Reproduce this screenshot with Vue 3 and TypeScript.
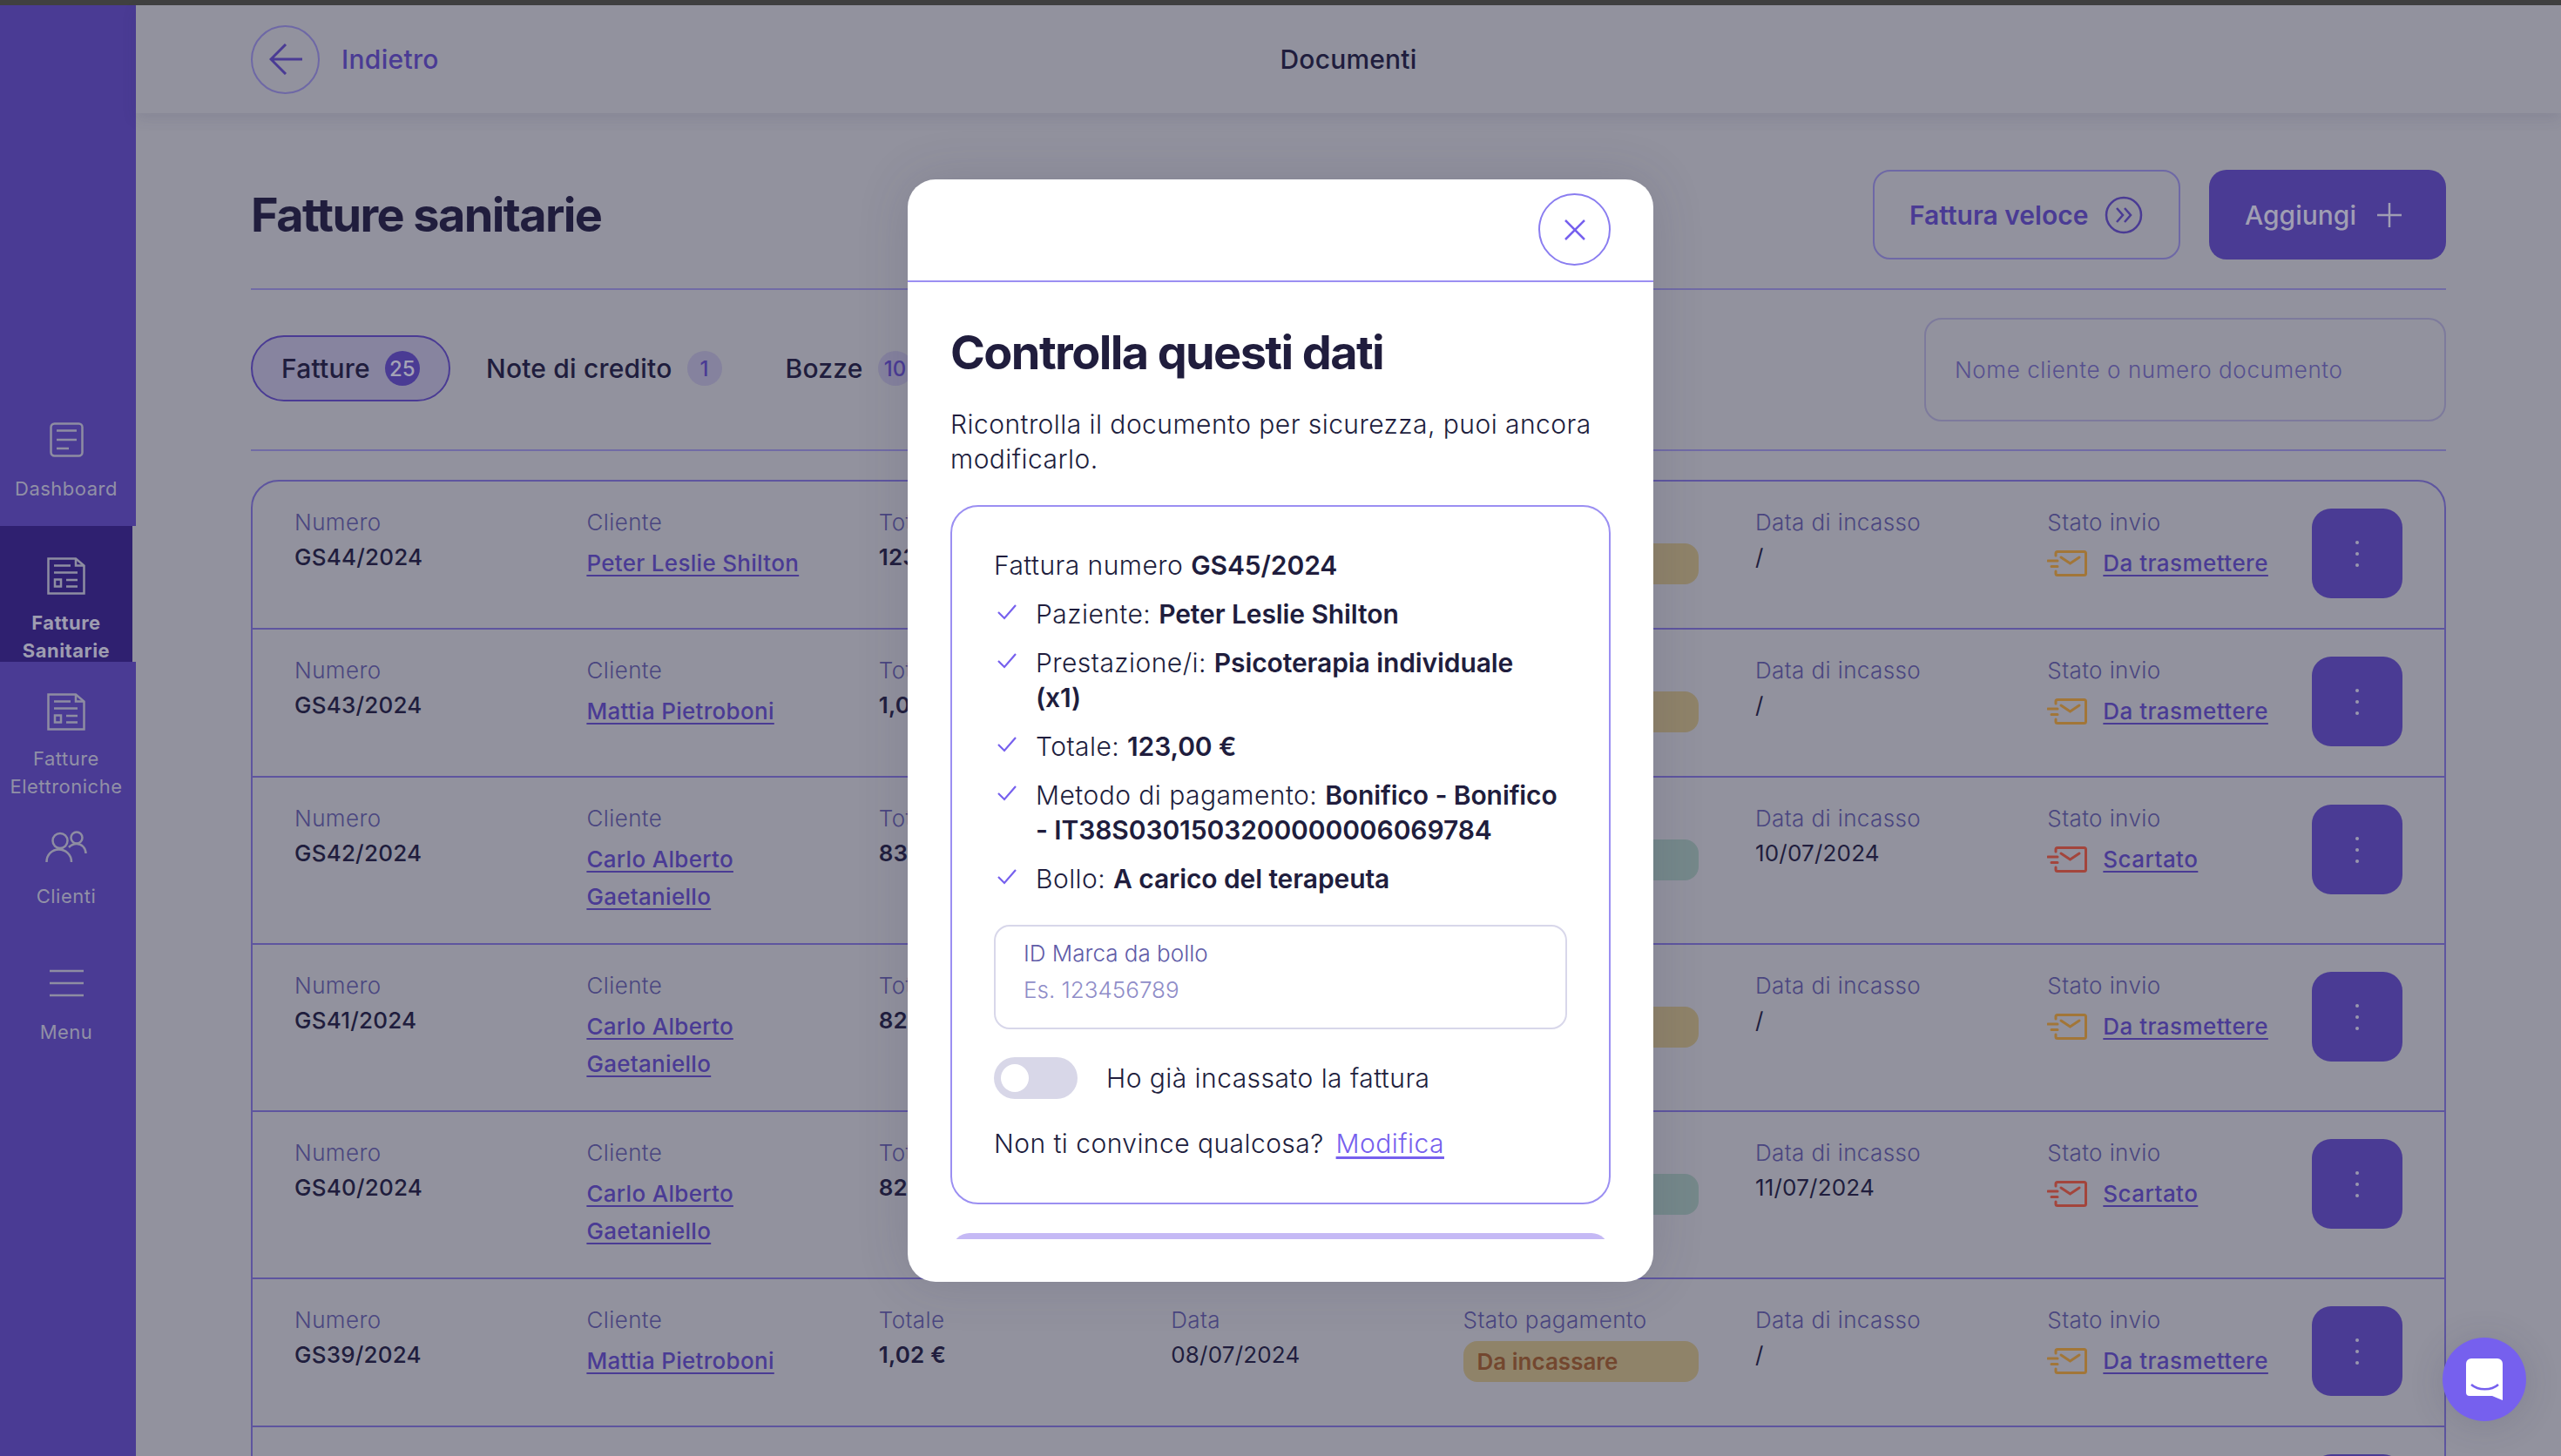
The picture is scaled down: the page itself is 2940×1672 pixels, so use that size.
<template>
  <div class="screen">
    <div class="topbar"></div>
    <div class="stage">
      <aside class="sidebar">
        <div
          v-for="item in navItems"
          :key="item.id"
          class="nav-item"
          :class="[item.icon, { active: item.active }]"
        >
          <div class="nav-icon">
            <svg v-if="item.icon === 'dash'" width="39" height="40" viewBox="0 0 39 40" fill="none">
              <rect x="1.5" y="1.5" width="36" height="37" rx="4" />
              <path d="M8 9.5H31M8 20H31M8 30H22" />
            </svg>
            <svg v-else-if="item.icon === 'doc'" width="44" height="43" viewBox="0 0 44 43" fill="none">
              <path d="M1.5 1.5H33L42.5 9.5V41.5H1.5Z" />
              <path d="M33 1.5V9.5H42.5M8 9.5H27M8 17.5H35M22 26H35M22 33.5H35" />
              <rect x="9" y="25.5" width="7" height="8" />
            </svg>
            <svg v-else-if="item.icon === 'people'" width="48" height="38" viewBox="0 0 48 38" fill="none">
              <circle cx="17" cy="11.5" r="8.5" />
              <path d="M1.5 36C1.5 27 8 21.5 15.5 21.5C23 21.5 30 27 30 36" />
              <circle cx="36" cy="8" r="6.5" />
              <path d="M27 19C30 16 33 15 36 15C42 15 46.5 20 46.5 26" />
            </svg>
            <svg v-else width="39" height="32" viewBox="0 0 39 32" fill="none">
              <path d="M0 2H39M0 16H39M0 30H39" />
            </svg>
          </div>
          <span class="nav-label">{{ item.label }}</span>
        </div>
      </aside>

      <main class="main">
        <header class="page-head">
          <div class="back">
            <span class="back-circle">
              <svg width="38" height="36" viewBox="0 0 38 36" fill="none">
                <path d="M38 18H2M19 1L2 18L19 35" />
              </svg>
            </span>
            <span class="back-text">Indietro</span>
          </div>
          <div class="page-name">Documenti</div>
          <div></div>
        </header>

        <section class="content">
          <div class="title-row">
            <h1>Fatture sanitarie</h1>
            <div class="actions">
              <button type="button" class="btn-outline">
                Fattura veloce
                <svg width="44" height="44" viewBox="0 0 44 44" fill="none">
                  <circle cx="22" cy="22" r="20" />
                  <path d="M14 14L21 22L14 30M23 14L30 22L23 30" />
                </svg>
              </button>
              <button type="button" class="btn-solid">
                Aggiungi
                <svg width="28" height="28" viewBox="0 0 28 28" fill="none">
                  <path d="M14 0V28M0 14H28" />
                </svg>
              </button>
            </div>
          </div>

          <div class="tabs-row">
            <div class="tabs">
              <div class="tab selected">Fatture <span class="count">25</span></div>
              <div class="tab">Note di credito <span class="count">1</span></div>
              <div class="tab">Bozze <span class="count">10</span></div>
            </div>
            <div class="search">Nome cliente o numero documento</div>
          </div>

          <div class="table">
            <div v-for="row in rows" :key="row.num" class="row">
              <div class="cell">
                <span class="label">Numero</span>
                <span class="value strong">{{ row.num }}</span>
              </div>
              <div class="cell">
                <span class="label">Cliente</span>
                <a class="link client">{{ row.client }}</a>
              </div>
              <div class="cell">
                <span class="label">Totale</span>
                <span class="value bold">{{ row.total }}</span>
              </div>
              <div class="cell">
                <span class="label">Data</span>
                <span class="value">{{ row.date }}</span>
              </div>
              <div class="cell">
                <span class="label">Stato pagamento</span>
                <span class="pill" :class="row.paid ? 'paid' : 'due'">
                  {{ row.paid ? 'Incassata' : 'Da incassare' }}
                </span>
              </div>
              <div class="cell">
                <span class="label">Data di incasso</span>
                <span class="value">{{ row.paidOn }}</span>
              </div>
              <div class="cell">
                <span class="label">Stato invio</span>
                <span class="send">
                  <svg
                    width="46"
                    height="30"
                    viewBox="0 0 46 30"
                    fill="none"
                    :class="row.rejected ? 'rejected' : 'waiting'"
                  >
                    <path d="M10 6V3.5Q10 1.5 12 1.5H42.5Q44.5 1.5 44.5 3.5V26.5Q44.5 28.5 42.5 28.5H12Q10 28.5 10 26.5V24" />
                    <path d="M1 12H12M5 18.500H12M16 8L26.500 15L37 8" />
                  </svg>
                  <a class="link">{{ row.rejected ? 'Scartato' : 'Da trasmettere' }}</a>
                </span>
              </div>
              <button type="button" class="row-menu" aria-label="Azioni">
                <svg width="6" height="32" viewBox="0 0 6 32">
                  <circle cx="3" cy="3" r="2" />
                  <circle cx="3" cy="16" r="2" />
                  <circle cx="3" cy="29" r="2" />
                </svg>
              </button>
            </div>
          </div>
        </section>
      </main>

      <div class="modal-layer">
        <div class="modal">
          <div class="modal-head">
            <button type="button" class="close" aria-label="Chiudi">
              <svg width="24" height="24" viewBox="0 0 24 24" fill="none">
                <path d="M1 1L23 23M23 1L1 23" />
              </svg>
            </button>
          </div>
          <div class="modal-body">
            <h2>Controlla questi dati</h2>
            <p class="intro">Ricontrolla il documento per sicurezza, puoi ancora modificarlo.</p>
            <div class="summary">
              <div class="summary-title">Fattura numero <b>GS45/2024</b></div>
              <ul class="checks">
                <li v-for="check in checks" :key="check.name">
                  <svg width="22" height="18" viewBox="0 0 22 18" fill="none">
                    <path d="M1 9L8 16L21 1" />
                  </svg>
                  <span>{{ check.name }}: <b>{{ check.value }}</b></span>
                </li>
              </ul>
              <div class="field">
                <span class="field-label">ID Marca da bollo</span>
                <span class="field-hint">Es. 123456789</span>
              </div>
              <div class="switch-row">
                <span class="switch"><span class="knob"></span></span>
                Ho già incassato la fattura
              </div>
              <div class="edit-row">Non ti convince qualcosa? <a>Modifica</a></div>
            </div>
            <div class="confirm"></div>
          </div>
        </div>
      </div>

      <button type="button" class="chat" aria-label="Chat">
        <svg width="42" height="48" viewBox="0 0 42 48">
          <path d="M6 0H36a6 6 0 0 1 6 6V48L30 43H4a4 4 0 0 1-4-4V6a6 6 0 0 1 6-6Z" fill="#fff" />
          <path d="M6 30C14 37 29 37 37 30" fill="none" stroke="#7660ee" stroke-width="2.500" />
        </svg>
      </button>
    </div>
  </div>
</template>

<script setup lang="ts">
interface NavItem {
  id: string
  label: string
  icon: string
  active?: boolean
}

interface InvoiceRow {
  num: string
  client: string
  total: string
  date: string
  paid: boolean
  paidOn: string
  rejected: boolean
}

const navItems: NavItem[] = [
  { id: 'dash', label: 'Dashboard', icon: 'dash' },
  { id: 'san', label: 'Fatture Sanitarie', icon: 'doc', active: true },
  { id: 'ele', label: 'Fatture Elettroniche', icon: 'doc' },
  { id: 'cli', label: 'Clienti', icon: 'people' },
  { id: 'menu', label: 'Menu', icon: 'menu' },
]

const rows: InvoiceRow[] = [
  { num: 'GS44/2024', client: 'Peter Leslie Shilton', total: '123,00 €', date: '10/07/2024', paid: false, paidOn: '/', rejected: false },
  { num: 'GS43/2024', client: 'Mattia Pietroboni', total: '1,02 €', date: '10/07/2024', paid: false, paidOn: '/', rejected: false },
  { num: 'GS42/2024', client: 'Carlo Alberto Gaetaniello', total: '83,00 €', date: '10/07/2024', paid: true, paidOn: '10/07/2024', rejected: true },
  { num: 'GS41/2024', client: 'Carlo Alberto Gaetaniello', total: '82,00 €', date: '09/07/2024', paid: false, paidOn: '/', rejected: false },
  { num: 'GS40/2024', client: 'Carlo Alberto Gaetaniello', total: '82,00 €', date: '09/07/2024', paid: true, paidOn: '11/07/2024', rejected: true },
  { num: 'GS39/2024', client: 'Mattia Pietroboni', total: '1,02 €', date: '08/07/2024', paid: false, paidOn: '/', rejected: false },
  { num: 'GS38/2024', client: 'Mattia Pietroboni', total: '1,02 €', date: '08/07/2024', paid: false, paidOn: '/', rejected: false },
]

const checks = [
  { name: 'Paziente', value: 'Peter Leslie Shilton' },
  { name: 'Prestazione/i', value: 'Psicoterapia individuale (x1)' },
  { name: 'Totale', value: '123,00 €' },
  { name: 'Metodo di pagamento', value: 'Bonifico - Bonifico - IT38S0301503200000006069784' },
  { name: 'Bollo', value: 'A carico del terapeuta' },
]
</script>

<style>
html,
body {
  margin: 0;
  background: #92929e;
}
</style>

<style scoped>
.screen {
  width: 2940px;
  height: 1672px;
  display: flex;
  flex-direction: column;
  overflow: hidden;
  font-family: Inter, "Liberation Sans", sans-serif;
  color: #201d3d;
  background: #92929e;
}
.topbar {
  height: 6px;
  flex: none;
  background: #404040;
}
.stage {
  flex: 1;
  min-height: 0;
  display: flex;
  position: relative;
}

/* sidebar */
.sidebar {
  width: 156px;
  flex: none;
  box-sizing: border-box;
  padding-top: 442px;
  background: #4a3b94;
}
.nav-item {
  height: 156px;
  box-sizing: border-box;
  padding: 32px 4px 0 0;
  display: flex;
  flex-direction: column;
  align-items: center;
  gap: 16px;
  text-align: center;
  color: #9190a6;
  font-size: 22px;
  line-height: 32px;
  letter-spacing: 0.5px;
}
.nav-item.doc {
  padding-top: 36px;
}
.nav-item.active {
  background: #2f2070;
  border-right: 4px solid #92929e;
  padding-right: 0;
  font-weight: 700;
  color: #9e9db0;
}
.nav-icon {
  height: 49px;
  display: flex;
  align-items: center;
  justify-content: center;
}
.nav-icon svg,
.nav-icon svg * {
  stroke: #8e8da2;
  stroke-width: 2.5;
}

/* page header */
.main {
  flex: 1;
  min-width: 0;
}
.page-head {
  height: 124px;
  box-sizing: border-box;
  padding: 0 132px;
  display: grid;
  grid-template-columns: 1fr auto 1fr;
  align-items: center;
  box-shadow: 0 6px 16px rgba(50, 50, 90, 0.12);
}
.back {
  display: flex;
  align-items: center;
  gap: 25px;
}
.back-circle {
  width: 79px;
  height: 79px;
  box-sizing: border-box;
  border: 2px solid #6e68a6;
  border-radius: 50%;
  display: flex;
  align-items: center;
  justify-content: center;
}
.back-circle svg {
  stroke: #4a3b94;
  stroke-width: 3;
}
.back-text {
  color: #4a3b94;
  font-size: 30px;
  font-weight: 500;
  letter-spacing: 0.3px;
}
.page-name {
  font-size: 30px;
  font-weight: 500;
  letter-spacing: 0.2px;
}

.content {
  padding: 66px 132px 0;
}
.title-row {
  height: 137px;
  box-sizing: border-box;
  padding-bottom: 34px;
  border-bottom: 2px solid #716ba6;
  display: flex;
  justify-content: space-between;
  align-items: center;
}
h1 {
  margin: 0;
  font-size: 54px;
  line-height: 64px;
  font-weight: 700;
  letter-spacing: -1.600px;
}
.actions {
  display: flex;
  gap: 33px;
}
.btn-outline,
.btn-solid {
  height: 103px;
  box-sizing: border-box;
  border-radius: 20px;
  display: flex;
  align-items: center;
  font-family: inherit;
  font-size: 30px;
  font-weight: 600;
}
.btn-outline {
  width: 353px;
  padding: 0 0 0 40px;
  gap: 19px;
  background: transparent;
  border: 2px solid #6e68a6;
  color: #4a3b94;
}
.btn-outline svg {
  stroke: #4a3b94;
  stroke-width: 2.5;
}
.btn-solid {
  width: 272px;
  padding: 0 0 0 41px;
  gap: 24px;
  background: #4a3b94;
  border: 0;
  font-weight: 500;
  color: #a09eb3;
}
.btn-solid svg {
  stroke: #a09eb3;
  stroke-width: 2.5;
}

.tabs-row {
  height: 185px;
  box-sizing: border-box;
  border-bottom: 2px solid #716ba6;
  display: flex;
  justify-content: space-between;
  align-items: center;
}
.tabs {
  display: flex;
  align-items: center;
  gap: 73px;
  margin-top: -3px;
}
.tab {
  display: flex;
  align-items: center;
  gap: 17px;
  font-size: 30px;
  font-weight: 500;
  letter-spacing: 0.2px;
}
.tab.selected {
  width: 229px;
  height: 76px;
  box-sizing: border-box;
  padding-left: 33px;
  border: 2px solid #4a3b94;
  border-radius: 38px;
  background: #87849f;
  margin-right: -32px;
}
.count {
  width: 40px;
  height: 40px;
  border-radius: 50%;
  display: flex;
  align-items: center;
  justify-content: center;
  background: #85829e;
  color: #4a3b94;
  font-size: 24px;
  font-weight: 500;
  letter-spacing: 0;
}
.selected .count {
  background: #4a3b94;
  color: #a4a3b6;
}
.search {
  width: 599px;
  height: 119px;
  box-sizing: border-box;
  padding: 0 33px;
  border: 2px solid #7d7a9c;
  border-radius: 20px;
  display: flex;
  align-items: center;
  color: #56508f;
  font-size: 26px;
  font-weight: 300;
  letter-spacing: 0.6px;
}

/* table */
.table {
  margin-top: 33px;
  border: 2px solid #5e559f;
  border-radius: 32px 32px 0 0;
}
.row {
  display: grid;
  grid-template-columns: repeat(6, 335.4px) 1fr 104px;
  padding: 0 48px;
  border-bottom: 2px solid #5e559f;
}
.cell {
  padding: 31px 0 32px;
  display: flex;
  flex-direction: column;
  align-items: flex-start;
}
.label {
  font-size: 26px;
  line-height: 32px;
  font-weight: 300;
  letter-spacing: 0.4px;
  color: #4a4680;
}
.value {
  margin-top: 4px;
  font-size: 26px;
  line-height: 40px;
  font-weight: 400;
  letter-spacing: 0.2px;
}
.value.strong {
  font-weight: 500;
}
.value.bold {
  font-weight: 600;
}
.link {
  color: #4a3b94;
  font-size: 26px;
  line-height: 43px;
  font-weight: 500;
  letter-spacing: 0.3px;
  text-decoration: underline;
  text-underline-offset: 4px;
}
.client {
  margin-top: 9px;
  max-width: 290px;
}
.pill {
  margin-top: 8px;
  width: 270px;
  height: 47px;
  box-sizing: border-box;
  padding-left: 16px;
  border-radius: 16px;
  display: flex;
  align-items: center;
  font-size: 26px;
  font-weight: 600;
}
.pill.due {
  background: #8f8369;
  color: #73472f;
}
.pill.paid {
  background: #75888a;
  color: #2f6a62;
}
.send {
  margin-top: 9px;
  height: 43px;
  display: flex;
  align-items: center;
  gap: 18px;
}
.send .link {
  letter-spacing: 0.45px;
}
.send svg {
  stroke-width: 3;
  stroke-linecap: round;
}
.send svg.waiting {
  stroke: #a27638;
}
.send svg.rejected {
  stroke: #a3453c;
}
.row-menu {
  width: 104px;
  height: 103px;
  margin: 31px 0 34px;
  padding: 0;
  border: 0;
  border-radius: 22px;
  background: #4a3b94;
  display: flex;
  align-items: center;
  justify-content: center;
}
.row-menu svg {
  fill: #9a98ae;
}

/* modal */
.modal-layer {
  position: absolute;
  inset: 0;
  display: flex;
  align-items: center;
  justify-content: center;
}
.modal {
  width: 856px;
  height: 1266px;
  box-sizing: border-box;
  padding-bottom: 49px;
  border-radius: 32px;
  background: #fff;
  box-shadow: 0 0 60px rgba(50, 50, 90, 0.16);
  display: flex;
  flex-direction: column;
  font-size: 30px;
  line-height: 40px;
  letter-spacing: 0.45px;
}
.modal-head {
  height: 118px;
  flex: none;
  box-sizing: border-box;
  padding: 16px 49px 0 0;
  border-bottom: 2px solid #9b8ff2;
  display: flex;
  justify-content: flex-end;
  align-items: flex-start;
}
.close {
  width: 83px;
  height: 83px;
  padding: 0;
  background: #fff;
  border: 2px solid #8a7df0;
  border-radius: 50%;
  display: flex;
  align-items: center;
  justify-content: center;
}
.close svg {
  stroke: #7660ee;
  stroke-width: 2.5;
}
.modal-body {
  flex: 1;
  min-height: 0;
  overflow: hidden;
  padding: 49px 49px 0;
}
h2 {
  margin: 0 0 30px;
  font-size: 54px;
  line-height: 64px;
  font-weight: 700;
  letter-spacing: -1.600px;
}
.intro {
  margin: 0 0 33px;
  font-weight: 300;
}
.summary {
  padding: 47px 48px 48px;
  border: 2px solid #9b8ff2;
  border-radius: 32px;
  font-weight: 300;
}
b {
  font-weight: 600;
  letter-spacing: -0.1px;
}
.checks {
  list-style: none;
  margin: 16px 0 33px;
  padding: 0;
  display: flex;
  flex-direction: column;
  gap: 16px;
}
.checks li {
  display: flex;
  gap: 22px;
  padding-right: 8px;
}
.checks svg {
  flex: none;
  margin: 9px 0 0 4px;
  stroke: #7660ee;
  stroke-width: 2.2;
}
.field {
  height: 120px;
  box-sizing: border-box;
  padding: 10px 32px 0;
  border: 2px solid #d8d7ea;
  border-radius: 18px;
  display: flex;
  flex-direction: column;
  font-size: 26px;
  line-height: 42px;
  letter-spacing: 0;
}
.field-label {
  color: #5f5ca8;
  font-weight: 300;
}
.field-hint {
  color: #8f8dc8;
  font-weight: 300;
}
.switch-row {
  margin-top: 32px;
  display: flex;
  align-items: center;
  gap: 33px;
}
.switch {
  width: 96px;
  height: 48px;
  box-sizing: border-box;
  padding: 8px;
  border-radius: 24px;
  background: #d8d7e8;
}
.knob {
  display: block;
  width: 32px;
  height: 32px;
  border-radius: 50%;
  background: #fff;
}
.edit-row {
  margin-top: 31px;
}
.edit-row a {
  margin-left: 5px;
  color: #7660ee;
  text-decoration: underline;
  text-underline-offset: 4px;
}
.confirm {
  height: 60px;
  margin: 33px 2px 0;
  border-radius: 20px 20px 0 0;
  background: #c5b9f5;
}

.chat {
  position: absolute;
  right: 40px;
  top: 1530px;
  width: 96px;
  height: 96px;
  padding: 0;
  border: 0;
  border-radius: 50%;
  background: #7660ee;
  box-shadow: 0 4px 40px rgba(50, 50, 90, 0.16);
  display: flex;
  align-items: center;
  justify-content: center;
}
</style>
